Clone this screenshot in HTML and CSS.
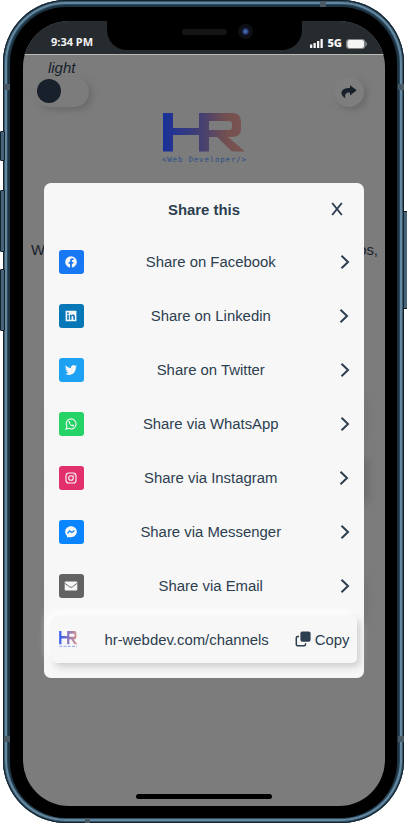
FILE: index.html
```
<!DOCTYPE html>
<html lang="en">
<head>
<meta charset="utf-8">
<title>Share this</title>
<link rel="stylesheet" href="styles.css">
</head>
<body>
<svg class="defs" width="0" height="0">
  <defs>
    <linearGradient id="hr" gradientUnits="userSpaceOnUse" x1="0" y1="0" x2="82" y2="0"><stop offset="0" stop-color="#18309a"/><stop offset=".5" stop-color="#49416f"/><stop offset=".78" stop-color="#74504f"/><stop offset="1" stop-color="#795453"/></linearGradient>
    <linearGradient id="hrl" gradientUnits="userSpaceOnUse" x1="0" y1="0" x2="82" y2="0"><stop offset="0" stop-color="#2e5af5"/><stop offset=".55" stop-color="#9078b8"/><stop offset="1" stop-color="#dc9a90"/></linearGradient>
    <path id="hrshape" fill-rule="evenodd" d="M0 0H10V15H36V0H69Q78 0 78 9V16Q78 24 69 24H65L82 38.500H69L54 24H46V38.500H36V22H10V38.500H0ZM46 8V17H66Q69 17 69 14V11Q69 8 66 8Z"/>
    <symbol id="chev" viewBox="0 0 10 16"><path d="M1.500 1.800 8 8 1.500 14.200" fill="none" stroke="#2c3e50" stroke-width="2"/></symbol>
  </defs>
</svg>
<div class="phone">
  <i class="key mute"></i><i class="key up"></i><i class="key down"></i><i class="key power"></i>
  <i class="band b1"></i><i class="band b2"></i><i class="band b3"></i><i class="band b4"></i><i class="band b5"></i><i class="band b6"></i>
  <div class="steel"><div class="bezel"><div class="screen">
    <header class="status">
      <span>9:34 PM</span>
      <div class="signal">
        <svg width="13" height="9" viewBox="0 0 13 9"><path d="M0 5.500h2.300V9H0zM3.500 4h2.300v5H3.500zM7 2h2.300v7H7zM10.500 0h2.300v9h-2.300z" fill="#f4f4f4"/></svg>
        <b>5G</b>
        <svg width="21" height="10" viewBox="0 0 21 10"><rect x=".5" y=".5" width="18.500" height="9" rx="2.500" fill="#777" stroke="#858585"/><rect x="1.500" y="1" width="16.500" height="8" rx="2" fill="#f4f4f4"/><path d="M19.800 3.200q1.200 1.800 0 3.600" fill="none" stroke="#aaa"/></svg>
      </div>
    </header>
    <main class="page">
      <div class="tools">
        <div class="mode"><em>light</em><div class="toggle"><i></i></div></div>
        <div class="sharebtn"><svg width="16" height="14" viewBox="0 0 16 14"><path d="M9 .3 15.700 5.200 9 10.400V7.500C5.500 7.200 3.400 8.300 4.300 13.300 1.700 12 0 9.500.6 7 1.400 3.900 4.900 2.900 9 3Z" fill="#18212b"/></svg></div>
      </div>
      <svg class="logo" width="86" height="51" viewBox="0 0 86 51"><use href="#hrshape" x="1" fill="url(#hr)"/><text x="0" y="49" textLength="84">&lt;Web Developer/&gt;</text></svg>
      <div class="copyline"><span>W</span><span>os,</span></div>
      <div class="cards"><i></i><i class="deep"></i><i></i></div>
    </main>
    <i class="home"></i>
  </div></div></div>
  <div class="notch"><i class="speaker"></i><i class="lens"></i></div>
  <section class="modal">
    <div class="head"><h1>Share this</h1><svg width="12" height="14" viewBox="0 0 12 14"><path d="M1.200 1 10.800 13M10.800 1 1.200 13" fill="none" stroke="#2c3e50" stroke-width="1.900"/></svg></div>
    <div class="row"><span class="ico fb"><svg viewBox="0 0 12 12"><circle cx="6" cy="6" r="5.800" fill="#f7f7f7"/><path d="M5.100 12V7.700H3.600V6h1.500V4.700c0-1.600.9-2.400 2.300-2.400l1.200.1v1.500h-.8C7 3.900 6.900 4.300 6.900 4.800V6h1.600l-.3 1.700H6.900V12Z" fill="#1877f2"/></svg></span><span>Share on Facebook</span><svg class="chev"><use href="#chev"/></svg></div>
    <div class="row"><span class="ico li"><svg viewBox="0 0 12 12"><rect x=".6" y=".8" width="10.800" height="10.500" rx=".5" fill="#f7f7f7"/><path d="M2.200 4.700h1.600v5H2.200zM2.100 2.400h1.700V4H2.100zM4.900 4.700h1.500v.7c.8-1.300 3.500-1.100 3.500 1.300v3H8.300V7.200c0-1.500-1.800-1.400-1.800 0v2.500H4.900Z" fill="#0777b7"/></svg></span><span>Share on Linkedin</span><svg class="chev"><use href="#chev"/></svg></div>
    <div class="row"><span class="ico tw"><svg viewBox="0 0 24 24"><path fill="#f7f7f7" d="M23.950 4.570a10 10 0 0 1-2.820.78 4.960 4.960 0 0 0 2.160-2.730c-.95.560-2 .960-3.130 1.190a4.920 4.920 0 0 0-8.380 4.480C7.690 8.090 4.070 6.130 1.640 3.160a4.820 4.820 0 0 0-.67 2.480c0 1.710.87 3.210 2.190 4.100a4.900 4.900 0 0 1-2.230-.62v.06a4.920 4.920 0 0 0 3.950 4.830 5 5 0 0 1-2.210.08 4.940 4.940 0 0 0 4.600 3.420A9.870 9.870 0 0 1 0 19.540a14 14 0 0 0 7.560 2.210c9.050 0 13.990-7.500 13.990-13.980l-.02-.64a9.900 9.900 0 0 0 2.420-2.560Z"/></svg></span><span>Share on Twitter</span><svg class="chev"><use href="#chev"/></svg></div>
    <div class="row"><span class="ico wa"><svg viewBox="0 0 12 12"><path d="M1.900 8.600A5 5 0 1 1 3.700 10.300L1 11.200Z" fill="none" stroke="#f7f7f7" stroke-width="1.100"/><path d="M4.200 3.100c-.8.600-.7 1.600.2 2.900C5.600 7.700 7.200 8.700 8.300 8.300c.7-.3 1-.9.800-1.300L7.700 6.400l-.7.800C5.900 6.700 5.200 6 4.800 5.200l.6-.7-.6-1.400Z" fill="#f7f7f7"/></svg></span><span>Share via WhatsApp</span><svg class="chev"><use href="#chev"/></svg></div>
    <div class="row"><span class="ico ig"><svg viewBox="0 0 12 12"><rect x="1" y="1" width="10" height="10" rx="2.800" fill="none" stroke="#f7f7f7" stroke-width="1.100"/><circle cx="6" cy="6" r="2.300" fill="none" stroke="#f7f7f7" stroke-width="1.100"/><circle cx="8.900" cy="3.100" r=".7" fill="#f7f7f7"/></svg></span><span>Share via Instagram</span><svg class="chev"><use href="#chev"/></svg></div>
    <div class="row"><span class="ico ms"><svg viewBox="0 0 12 12"><path d="M6 .3C2.700.3.200 2.600.200 5.800c0 1.600.7 3 1.800 4v1.800l1.900-.7c.7.200 1.400.3 2.100.3 3.300 0 5.800-2.400 5.800-5.400C11.800 2.600 9.300.3 6 .3Z" fill="#f7f7f7"/><path d="M2.500 7.400 4.700 4.800 6.800 6.500 9.500 4.500" fill="none" stroke="#0a84ff" stroke-width="1.300"/></svg></span><span>Share via Messenger</span><svg class="chev"><use href="#chev"/></svg></div>
    <div class="row"><span class="ico em"><svg viewBox="0 0 12 12"><rect x="-.3" y="1.600" width="12.600" height="9" rx="1" fill="#f7f7f7"/><path d="M-.2 3.200 4.700 6.900Q6 7.800 7.300 6.900L12.200 3.200" fill="none" stroke="#636363" stroke-width=".9"/></svg></span><span>Share via Email</span><svg class="chev"><use href="#chev"/></svg></div>
    <div class="link">
      <svg width="19" height="18" viewBox="0 0 86 81"><use href="#hrshape" transform="translate(1 4) scale(1 1.560)" fill="url(#hrl)"/><path d="M2 74H82" stroke="#9db2ee" stroke-width="5" stroke-dasharray="13 6"/></svg>
      <span>hr-webdev.com/channels</span>
      <div class="copy"><svg width="16" height="16" viewBox="0 0 16 16"><rect x="5.400" y=".4" width="10.200" height="10.400" rx="2" fill="#2c3e50"/><path d="M4 5.600H2.500Q1.300 5.600 1.300 6.800V13.500Q1.300 14.700 2.500 14.700H9.300Q10.500 14.700 10.500 13.500V12.200" fill="none" stroke="#2c3e50" stroke-width="1.500"/></svg><span>Copy</span></div>
    </div>
  </section>
</div>
</body>
</html>
```

FILE: styles.css
```
* { box-sizing: border-box; }
body { margin: 0; width: 407px; height: 823px; background: #fff; overflow: hidden; font: 14.900px/17px "Liberation Sans", Arial, sans-serif; color: #2c3e50; }
svg { display: block; flex: none; }
.defs { position: absolute; }
.phone { position: relative; width: 407px; height: 823px; padding: 0 3px; }
.steel { height: 823px; padding: 7px 7px 5px; border-radius: 63px; background: #1d3341; box-shadow: inset 0 0 0 1px #14222c, inset 0 0 0 2px #38556a, inset 0 0 0 4px #6488a0, inset 0 0 0 5px #2b4a60; }
.bezel { height: 811px; padding: 14px 12px 12px 13px; border-radius: 56px; background: #000; }
.screen { display: flex; flex-direction: column; height: 784.500px; border-radius: 46px; overflow: hidden; background: #7c7c7c; align-items: center; }
.status { width: 100%; height: 34px; flex: none; display: flex; justify-content: space-between; align-items: center; padding: 9px 18px 0 28px; background: #262b2f; border-bottom: 1px solid #b8bbb5; color: #f4f4f4; font: bold 11px/14px "Noto Sans", sans-serif; }
.signal { display: flex; align-items: center; gap: 4px; }
.signal b { font-size: 11px; margin-top: 1px; }
.signal svg { margin-top: 3px; }
.page { width: 100%; flex: 1; display: flex; flex-direction: column; align-items: center; color: #18212b; }
.tools { width: 100%; height: 57px; display: flex; justify-content: space-between; padding: 4.500px 21px 0 12px; }
.mode { width: 54px; }
.mode em { display: block; padding-left: 13px; }
.toggle { width: 54px; height: 30px; border-radius: 15px; padding: 2.500px 2px; background: #7c7c7c; box-shadow: 3px 3px 6px #6a6a6a, -2px -2px 5px #7f7f7f; }
.toggle i { display: block; width: 24px; height: 24px; border-radius: 50%; background: #18212b; }
.sharebtn { width: 30px; height: 30px; margin-top: 17px; border-radius: 50%; display: grid; place-items: center; background: #7e7e7e; box-shadow: 3px 3px 6px #6a6a6a, -3px -3px 6px #7f7f7f; }
.logo { margin: 1px 0 0 1px; }
.logo text { font: 7.500px "DejaVu Sans Mono", monospace; fill: #304f88; }
.copyline { width: 100%; display: flex; justify-content: space-between; padding: 0 7px 0 8px; margin-top: 78px; }
.cards { width: 320px; margin-top: 136px; display: grid; gap: 15px; }
.cards i { height: 45px; border-radius: 5px; box-shadow: 3px 3px 8px #757575; }
.cards .deep { margin-bottom: 60px; box-shadow: 5px 3px 8px #6c6c6c; }
.home { width: 136px; height: 5px; margin-bottom: 7px; border-radius: 3px; background: #000; flex: none; }
.notch { position: absolute; left: 107px; top: 20px; width: 195px; height: 30px; background: #000; border-radius: 0 0 20px 20px; }
.speaker { position: absolute; left: 75px; top: 9px; width: 45px; height: 6px; border-radius: 3px; background: #151515; }
.lens { position: absolute; left: 131px; top: 4px; width: 15px; height: 15px; border-radius: 50%; background: radial-gradient(circle at 50% 50%, #3d6fa8 0 1px, #282563 3px, #0d1015 4px); }
.key { position: absolute; width: 5px; background: #456479; border: 1px solid #14222c; border-radius: 1px; }
.mute { left: 0; top: 131px; height: 30px; }
.up { left: 0; top: 190px; height: 62px; }
.down { left: 0; top: 269px; height: 62px; }
.power { left: 403px; top: 211px; height: 98px; }
.band { position: absolute; width: 6px; height: 6px; background: #4a5a64; z-index: 1; }
.b1 { left: 4px; top: 84px; } .b2 { left: 398px; top: 84px; }
.b3 { left: 4px; top: 736px; } .b4 { left: 398px; top: 736px; }
.b5 { left: 320px; top: 1px; } .b6 { left: 85px; top: 818px; width: 5px; height: 5px; }
.modal { position: absolute; left: 44px; top: 182.500px; width: 320px; height: 495.500px; border-radius: 7px; background: #f7f7f7; }
.head { height: 52.500px; display: grid; grid-template-columns: 1fr auto 1fr; align-items: center; padding: 1px 21.500px 0; }
.head h1 { grid-column: 2; margin: 2px 0 0; font-size: 14.900px; line-height: 17px; }
.head svg { justify-self: end; }
.row { height: 54px; display: flex; align-items: center; justify-content: space-between; padding: 0 14.500px 0 15px; }
.row > span:nth-child(2) { margin: 1px 1.500px 0 0; }
.ico { width: 24.500px; height: 24px; border-radius: 3px; display: grid; place-items: center; }
.ico svg { width: 12px; height: 12px; overflow: visible; }
.fb { background: #1877f2; } .li { background: #0777b7; } .tw { background: #1da1f2; } .wa { background: #25d366; }
.ig { background: #e1306c; } .ms { background: #0a84ff; } .em { background: #636363; }
.chev { width: 10px; height: 16px; }
.link { height: 47px; margin: 2.500px 7.500px 0; padding: 0 7px; border-radius: 5px; display: flex; align-items: center; justify-content: space-between; background: #f7f7f7; box-shadow: 3px 4px 7px #cfcfcf, -4px -4px 8px #fff; }
.link span { margin-top: 2px; }
.link > span { margin-left: 1px; }
.copy { display: flex; align-items: center; gap: 4px; }
```
